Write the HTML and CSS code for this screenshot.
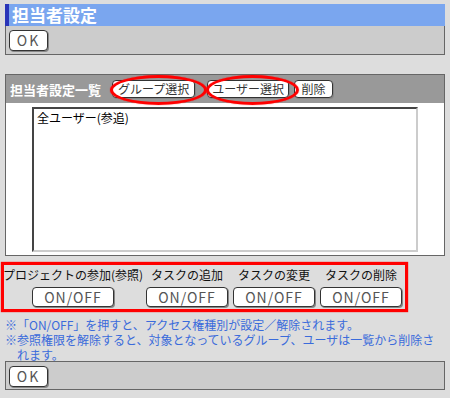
FILE: index.html
```html
<!DOCTYPE html>
<html lang="ja">
<head>
    <meta charset="UTF-8">
    <title>担当者設定</title>
    <link rel="stylesheet" href="styles.css">
</head>
<body>
    <div class="page">
        <div class="title-bar">担当者設定</div>
        <div class="action-box">
            <button class="btn btn-ok">OK</button>
        </div>

        <div class="list-head">
            <span class="list-title">担当者設定一覧</span>
            <button class="btn btn-small btn-group">グループ選択</button>
            <button class="btn btn-small btn-user">ユーザー選択</button>
            <button class="btn btn-small btn-del">削除</button>
            <span class="mark mark-group"></span>
            <span class="mark mark-user"></span>
        </div>
        <div class="list-body">
            <div class="listbox">
                <div class="list-item">全ユーザー(参追)</div>
            </div>
        </div>
    </div>

    <div class="perm-box">
        <div class="perm-col col-wide">
            <span class="perm-label">プロジェクトの参加(参照)</span>
            <button class="btn btn-toggle">ON/OFF</button>
        </div>
        <div class="perm-col">
            <span class="perm-label">タスクの追加</span>
            <button class="btn btn-toggle">ON/OFF</button>
        </div>
        <div class="perm-col">
            <span class="perm-label">タスクの変更</span>
            <button class="btn btn-toggle">ON/OFF</button>
        </div>
        <div class="perm-col">
            <span class="perm-label">タスクの削除</span>
            <button class="btn btn-toggle">ON/OFF</button>
        </div>
    </div>

    <div class="page">
        <div class="notes">
            <p class="note">※「ON/OFF」を押すと、アクセス権種別が設定／解除されます。</p>
            <p class="note">※参照権限を解除すると、対象となっているグループ、ユーザは一覧から削除されます。</p>
        </div>
        <div class="action-box bottom">
            <button class="btn btn-ok">OK</button>
        </div>
    </div>
</body>
</html>
```

FILE: styles.css
```css
body {
    margin: 0;
    padding-top: 4px;
    background: #dddddd;
    font-family: "Noto Sans CJK JP", "Noto Sans", sans-serif;
    font-size: 12px;
    color: #000;
}

.page {
    margin-left: 5px;
    width: 440px;
}

.title-bar {
    height: 22px;
    line-height: 22px;
    background: #7aa6ef;
    border-left: 4px solid #2a35b8;
    padding-left: 3px;
    color: #fff;
    font-size: 17px;
    font-weight: bold;
    box-sizing: border-box;
}

.action-box {
    height: 29px;
    background: #cccccc;
    border: 1px solid #666;
    border-top: none;
    box-sizing: border-box;
    padding: 4px 0 0 3px;
}

.action-box.bottom {
    border-top: 1px solid #666;
}

.btn {
    background: #fff;
    border: 1px solid #333;
    border-radius: 4px;
    box-shadow: 1px 1px 0 #888;
    font-family: "Noto Sans CJK JP", "Noto Sans", sans-serif;
    color: #444;
    padding: 0;
    cursor: pointer;
}

.btn-ok {
    width: 39px;
    height: 21px;
    font-size: 14px;
    letter-spacing: 2px;
    line-height: 19px;
    color: #555;
}

/* 一覧 */
.list-head {
    position: relative;
    margin-top: 19px;
    height: 29px;
    background: #999999;
    border: 1px solid #666;
    border-bottom: none;
    box-sizing: border-box;
    display: flex;
    align-items: center;
    padding-left: 4px;
}

.list-title {
    color: #fff;
    font-size: 13px;
    font-weight: bold;
    margin-right: 11px;
}

.btn-small {
    height: 18px;
    font-size: 12px;
    line-height: 16px;
    color: #333;
    padding: 0 4px;
}

.btn-group { width: 83px; }
.btn-user { width: 82px; margin-left: 12px; }
.btn-del { width: 39px; margin-left: 5px; }

.mark {
    position: absolute;
    border: 3px solid #f00;
    border-radius: 50%;
    box-shadow: 0 0 1px #f00;
    box-sizing: border-box;
}

.mark-group { left: 104px; top: 0; width: 97px; height: 30px; }
.mark-user { left: 200px; top: 0; width: 93px; height: 30px; }

.list-body {
    height: 153px;
    background: #fff;
    border: 1px solid #666;
    border-top: none;
    box-sizing: border-box;
    padding: 4px 0 0 26px;
}

.listbox {
    width: 386px;
    height: 145px;
    box-sizing: border-box;
    border-top: 2px solid #444;
    border-left: 2px solid #444;
    border-right: 2px solid #ccc;
    border-bottom: 2px solid #ccc;
    background: #fff;
}

.list-item {
    padding: 1px 0 0 3px;
    font-size: 12px;
    line-height: 15px;
}

/* アクセス権 */
.perm-box {
    margin: 6px 0 0 1px;
    width: 407px;
    height: 50px;
    border: 3px solid #f00;
    box-shadow: 0 0 1px #f00;
    box-sizing: border-box;
    display: flex;
    gap: 5px;
    padding: 2px 0 0 1px;
}

.perm-col {
    display: flex;
    flex-direction: column;
    align-items: center;
    width: 82px;
}

.perm-col.col-wide {
    width: 136px;
}

.perm-label {
    font-size: 12px;
    line-height: 16px;
    white-space: nowrap;
    margin-bottom: 4px;
    color: #111;
}

.btn-toggle {
    width: 82px;
    height: 20px;
    font-size: 14px;
    line-height: 18px;
    letter-spacing: 1px;
    color: #555;
}

.notes {
    padding-top: 5px;
    height: 44px;
}

.note {
    margin: 0;
    color: #3a6bdb;
    font-size: 12px;
    line-height: 15px;
    padding-left: 12px;
    text-indent: -12px;
}
```
